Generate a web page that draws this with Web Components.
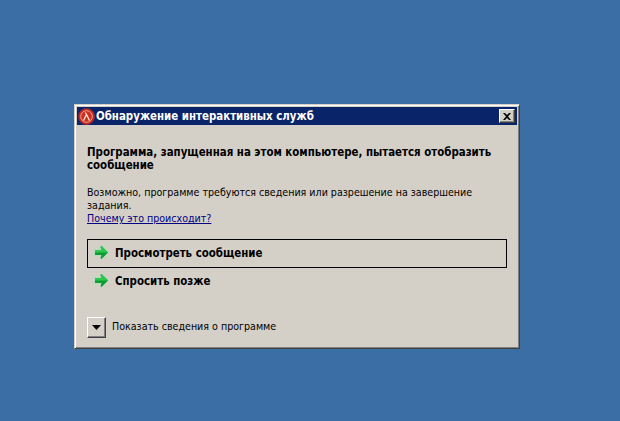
<!DOCTYPE html>
<html>
<head>
<meta charset="utf-8">
<style>
  html, body { margin: 0; height: 100%; }
  body { background: #3a6ea5; overflow: hidden; }
</style>
</head>
<body>
<ui-desktop>
  <ui-dialog caption="Обнаружение интерактивных служб">
    <h-main>Программа, запущенная на этом компьютере, пытается отобразить сообщение</h-main>
    <p-text link="Почему это происходит?">Возможно, программе требуются сведения или разрешение на завершение задания.</p-text>
    <cmd-link focused>Просмотреть сообщение</cmd-link>
    <cmd-link>Спросить позже</cmd-link>
    <more-toggle>Показать сведения о программе</more-toggle>
  </ui-dialog>
</ui-desktop>

<script>
const FONT = '"DejaVu Sans Condensed", "DejaVu Sans", "Noto Sans", sans-serif';

class UiDesktop extends HTMLElement {
  constructor() {
    super();
    this.attachShadow({ mode: 'open' }).innerHTML = `
      <style>
        :host{ display:block; width:620px; height:421px; box-sizing:border-box; padding:104px 0 0 74px; background:#3a6ea5; }
      </style>
      <slot></slot>`;
  }
}

class UiDialog extends HTMLElement {
  constructor() {
    super();
    const caption = this.getAttribute('caption') || '';
    this.attachShadow({ mode: 'open' }).innerHTML = `
      <style>
        :host{
          display:block; box-sizing:border-box; width:446px; height:245px;
          background:#d4d0c8; color:#000;
          font:11px/14px ${FONT}; font-stretch:condensed;
          border:1px solid; border-color:#d4d0c8 #404040 #404040 #d4d0c8;
          box-shadow:inset 1px 1px 0 #fff, inset -1px -1px 0 #808080;
          padding:2px;
        }
        .title{
          height:18px; background:#0a246a; display:flex; align-items:center;
          padding:0 2px 0 1px; color:#fff; font-weight:bold; font-size:11.400px;
        }
        .title svg.logo{ flex:none; margin-right:1px; }
        .title span{ flex:1; white-space:nowrap; }
        .close{
          width:16px; height:14px; box-sizing:border-box; background:#d4d0c8;
          border:1px solid; border-color:#fff #404040 #404040 #fff;
          box-shadow:inset -1px -1px 0 #808080;
          display:flex; align-items:center; justify-content:center;
        }
        .body{ padding:0 10px; }
      </style>
      <div class="title">
        <svg class="logo" width="17" height="17" viewBox="0 0 17 17">
          <circle cx="8.500" cy="8.500" r="8" fill="#c92a1e" stroke="#8a2a3a"/>
          <circle cx="8.500" cy="8.500" r="5.800" fill="#c8301f" stroke="#eda68e" stroke-width="1"/>
          <path d="M5.500 12.500 L8.500 6.500 L7.300 4.500 M8.500 6.500 L11.500 12.500" fill="none" stroke="#ffe8d8" stroke-width="1.300"/>
        </svg>
        <span>${caption}</span>
        <div class="close">
          <svg width="8" height="7" viewBox="0 0 8 7"><path d="M0 0h2l2 2 2-2h2L5 3.500 8 7H6L4 5 2 7H0l3-3.500z" fill="#000"/></svg>
        </div>
      </div>
      <div class="body"><slot></slot></div>`;
  }
}

class HMain extends HTMLElement {
  constructor() {
    super();
    this.attachShadow({ mode: 'open' }).innerHTML = `
      <style>
        :host{ display:block; margin-top:21px; font-weight:bold; font-size:11.400px; line-height:13px; width:415px; }
      </style>
      <slot></slot>`;
  }
}

class PText extends HTMLElement {
  constructor() {
    super();
    const link = this.getAttribute('link') || '';
    this.attachShadow({ mode: 'open' }).innerHTML = `
      <style>
        :host{ display:block; margin-top:14px; font-size:10.600px; line-height:13px; width:400px; }
        a{ display:block; color:#000080; text-decoration:underline; }
      </style>
      <slot></slot>
      <a href="#">${link}</a>`;
  }
}

class CmdLink extends HTMLElement {
  constructor() {
    super();
    this.attachShadow({ mode: 'open' }).innerHTML = `
      <style>
        :host{
          display:flex; align-items:center; box-sizing:border-box; width:420px; height:29px;
          padding:0 0 4px 5px; gap:5px; font-weight:bold; font-size:11.400px;
          border:1px solid transparent;
        }
        :host([focused]){ border-color:#000; margin-top:14px; padding-bottom:2px; }
        svg{ flex:none; }
      </style>
      <svg width="17" height="17" viewBox="0 0 17 17">
        <path d="M8.500 1 L16 8.500 L8.500 16 L6.500 14 L7.500 12 H1 V5 H7.500 L6.500 3 Z" fill="#a8e4b4" opacity=".7"/>
        <path d="M8.500 2 L15 8.500 L8.500 15 L7.500 14 L8.500 11 H2 V6 H8.500 L7.500 3 Z" fill="#0f9a36"/>
        <path d="M8.500 2 L15 8.500 H2 V6 H8.500 L7.500 3 Z" fill="#2cc850"/>
      </svg>
      <slot></slot>`;
  }
}

class MoreToggle extends HTMLElement {
  constructor() {
    super();
    this.attachShadow({ mode: 'open' }).innerHTML = `
      <style>
        :host{ display:flex; align-items:center; gap:6px; margin-top:20px; font-size:10.600px; }
        .btn{
          width:19px; height:21px; box-sizing:border-box; background:#d4d0c8;
          border:1px solid; border-color:#fff #404040 #404040 #fff;
          box-shadow:inset -1px -1px 0 #808080;
          display:flex; align-items:center; justify-content:center;
        }
        .label{ margin-bottom:3px; }
      </style>
      <div class="btn"><svg width="9" height="5" viewBox="0 0 9 5"><path d="M0 0h9L4.500 5z" fill="#000"/></svg></div>
      <span class="label"><slot></slot></span>`;
  }
}

customElements.define('ui-desktop', UiDesktop);
customElements.define('ui-dialog', UiDialog);
customElements.define('h-main', HMain);
customElements.define('p-text', PText);
customElements.define('cmd-link', CmdLink);
customElements.define('more-toggle', MoreToggle);
</script>
</body>
</html>
